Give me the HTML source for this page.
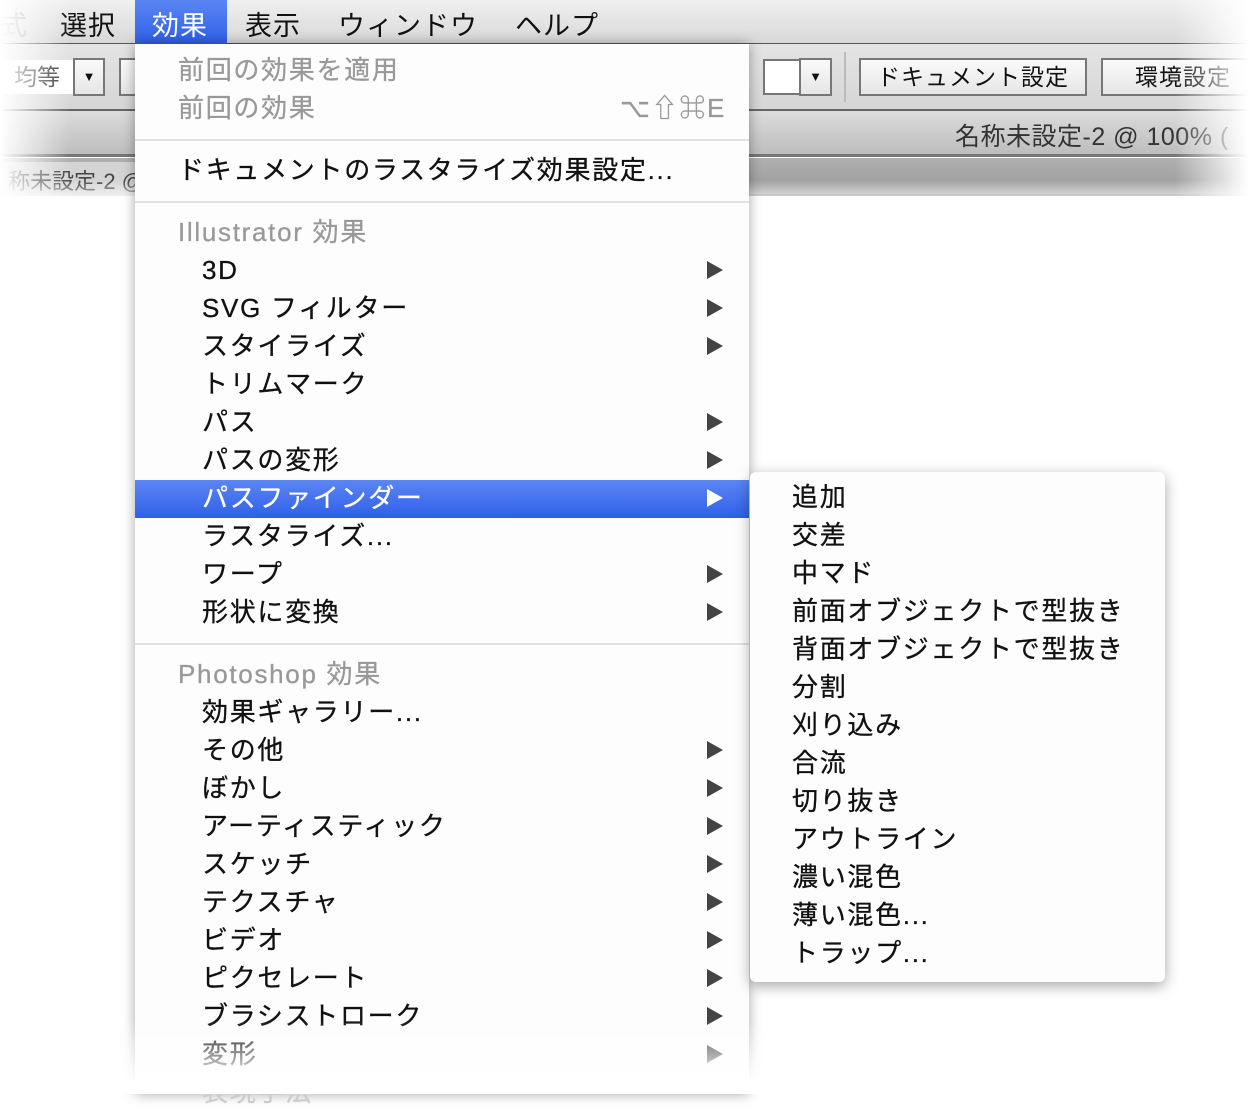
<!DOCTYPE html>
<html><head><meta charset="utf-8"><style>
*{margin:0;padding:0;box-sizing:border-box}
body{width:1248px;height:1094px;background:#fff;position:relative;overflow:hidden;font-family:"Liberation Sans","Noto Sans CJK JP",sans-serif;}
.a{position:absolute;white-space:nowrap}
#mb{left:0;top:0;width:1248px;height:44px;background:linear-gradient(#f0f0f0,#d8d8d8);border-bottom:1px solid #555}
#tb{left:0;top:44px;width:1248px;height:67px;background:linear-gradient(#e4e4e4,#d6d6d6);border-bottom:2px solid #666}
#tt{left:0;top:111px;width:1248px;height:46px;background:linear-gradient(#dcdcdc,#bdbdbd);border-bottom:3px solid #777}
#gb{left:0;top:158px;width:1248px;height:38px;background:linear-gradient(#b0b0b0,#999);border-bottom:2px solid #777}
.mt{top:4px;font-size:27px;color:#111;letter-spacing:1px}
.btn{border:2px solid #777;background:linear-gradient(#fafafa,#e6e6e6);font-size:23px;color:#111;height:38px;line-height:34px;text-align:center}
#fl{left:0;top:0;width:70px;height:200px;background:linear-gradient(90deg,#fff,rgba(255,255,255,0))}
#fr{left:1175px;top:0;width:73px;height:200px;background:linear-gradient(90deg,rgba(255,255,255,0),#fff)}
#fb{left:0;top:180px;width:1248px;height:25px;background:linear-gradient(rgba(255,255,255,0),#fff)}
#menu{left:135px;top:44px;width:614px;height:1050px;background:#fdfdfd;box-shadow:0 0 12px rgba(0,0,0,.35)}
.it{font-size:26px;color:#111;height:38px;line-height:38px;letter-spacing:1.7px;-webkit-text-stroke:0.3px currentColor}
.g{color:#999}
.sep{height:2px;background:#e2e2e2;width:614px;left:0}
.ar{width:0;height:0;border-top:9px solid transparent;border-bottom:9px solid transparent;border-left:16px solid #444}
#hl{left:0;top:436px;width:614px;height:38px;background:linear-gradient(#5b86f4,#2f5fe8)}
#sub{left:750px;top:472px;width:415px;height:510px;background:#fdfdfd;border-radius:6px;box-shadow:0 4px 14px rgba(0,0,0,.35)}
#fb2{left:0;top:1020px;width:1248px;height:74px;background:linear-gradient(rgba(255,255,255,0),#fff 85%)}
</style></head><body>
<div class="a" id="mb"></div>
<div class="a mt" style="left:0;color:#aaa">式</div>
<div class="a mt" style="left:60px">選択</div>
<div class="a" style="left:135px;top:0;width:92px;height:44px;background:linear-gradient(#5b86f4,#2f5fe8)"></div>
<div class="a mt" style="left:152px;color:#fff">効果</div>
<div class="a mt" style="left:245px">表示</div>
<div class="a mt" style="left:338px">ウィンドウ</div>
<div class="a mt" style="left:515px">ヘルプ</div>
<div class="a" id="tb"></div>
<div class="a" style="left:0;top:60px;width:74px;height:34px;background:#fff;font-size:23px;line-height:34px;color:#333;padding-left:14px">均等</div>
<div class="a btn" style="left:73px;top:58px;width:32px;font-size:13px">▼</div>
<div class="a btn" style="left:119px;top:58px;width:20px"></div>
<div class="a" style="left:763px;top:59px;width:38px;height:36px;background:#fff;border:2px solid #777"></div>
<div class="a btn" style="left:799px;top:58px;width:33px;font-size:13px">▼</div>
<div class="a" style="left:844px;top:52px;width:2px;height:50px;background:#bbb"></div>
<div class="a btn" style="left:859px;top:58px;width:228px;letter-spacing:1px">ドキュメント設定</div>
<div class="a btn" style="left:1101px;top:58px;width:160px;text-align:left;padding-left:32px;letter-spacing:1px">環境設定</div>
<div class="a" id="tt"></div>
<div class="a" style="left:955px;top:117px;font-size:25px;color:#333;letter-spacing:0.5px">名称未設定-2 @ 100% (</div>
<div class="a" id="gb"></div>
<div class="a" style="left:0;top:162px;width:150px;height:34px;background:#d4d4d4"></div>
<div class="a" style="left:8px;top:164px;font-size:22px;color:#444">称未設定-2 @</div>
<div class="a" id="fl"></div><div class="a" id="fr"></div><div class="a" id="fb"></div>

<div class="a" id="menu">
<div class="a it g" style="left:43px;top:7px">前回の効果を適用</div>
<div class="a it g" style="left:43px;top:45px">前回の効果</div>
<div class="a it g" style="left:485px;top:45px">⌥⇧⌘E</div>
<div class="a sep" style="top:95px"></div>
<div class="a it" style="left:43px;top:107px">ドキュメントのラスタライズ効果設定...</div>
<div class="a sep" style="top:157px"></div>
<div class="a it g" style="left:43px;top:169px">Illustrator 効果</div>
<div class="a" id="hl"></div>
<div class="a it" style="left:67px;top:207px">3D</div>
<div class="a it" style="left:67px;top:245px">SVG フィルター</div>
<div class="a it" style="left:67px;top:283px">スタイライズ</div>
<div class="a it" style="left:67px;top:321px">トリムマーク</div>
<div class="a it" style="left:67px;top:359px">パス</div>
<div class="a it" style="left:67px;top:397px">パスの変形</div>
<div class="a it" style="left:67px;top:435px;color:#fff">パスファインダー</div>
<div class="a it" style="left:67px;top:473px">ラスタライズ...</div>
<div class="a it" style="left:67px;top:511px">ワープ</div>
<div class="a it" style="left:67px;top:549px">形状に変換</div>
<div class="a sep" style="top:599px"></div>
<div class="a it g" style="left:43px;top:611px">Photoshop 効果</div>
<div class="a it" style="left:67px;top:649px">効果ギャラリー...</div>
<div class="a it" style="left:67px;top:687px">その他</div>
<div class="a it" style="left:67px;top:725px">ぼかし</div>
<div class="a it" style="left:67px;top:763px">アーティスティック</div>
<div class="a it" style="left:67px;top:801px">スケッチ</div>
<div class="a it" style="left:67px;top:839px">テクスチャ</div>
<div class="a it" style="left:67px;top:877px">ビデオ</div>
<div class="a it" style="left:67px;top:915px">ピクセレート</div>
<div class="a it" style="left:67px;top:953px">ブラシストローク</div>
<div class="a it" style="left:67px;top:991px">変形</div>
<div class="a it" style="left:67px;top:1029px;color:#ccc">表現手法</div>
<div class="a ar" style="left:572px;top:217px"></div>
<div class="a ar" style="left:572px;top:255px"></div>
<div class="a ar" style="left:572px;top:293px"></div>
<div class="a ar" style="left:572px;top:369px"></div>
<div class="a ar" style="left:572px;top:407px"></div>
<div class="a ar" style="left:572px;top:445px;border-left-color:#fff"></div>
<div class="a ar" style="left:572px;top:521px"></div>
<div class="a ar" style="left:572px;top:559px"></div>
<div class="a ar" style="left:572px;top:697px"></div>
<div class="a ar" style="left:572px;top:735px"></div>
<div class="a ar" style="left:572px;top:773px"></div>
<div class="a ar" style="left:572px;top:811px"></div>
<div class="a ar" style="left:572px;top:849px"></div>
<div class="a ar" style="left:572px;top:887px"></div>
<div class="a ar" style="left:572px;top:925px"></div>
<div class="a ar" style="left:572px;top:963px"></div>
<div class="a ar" style="left:572px;top:1001px"></div>
</div>

<div class="a" id="sub">
<div class="a it" style="left:42px;top:6px">追加</div>
<div class="a it" style="left:42px;top:44px">交差</div>
<div class="a it" style="left:42px;top:82px">中マド</div>
<div class="a it" style="left:42px;top:120px">前面オブジェクトで型抜き</div>
<div class="a it" style="left:42px;top:158px">背面オブジェクトで型抜き</div>
<div class="a it" style="left:42px;top:196px">分割</div>
<div class="a it" style="left:42px;top:234px">刈り込み</div>
<div class="a it" style="left:42px;top:272px">合流</div>
<div class="a it" style="left:42px;top:310px">切り抜き</div>
<div class="a it" style="left:42px;top:348px">アウトライン</div>
<div class="a it" style="left:42px;top:386px">濃い混色</div>
<div class="a it" style="left:42px;top:424px">薄い混色...</div>
<div class="a it" style="left:42px;top:462px">トラップ...</div>
</div>
<div class="a" id="fb2"></div>
</body></html>
